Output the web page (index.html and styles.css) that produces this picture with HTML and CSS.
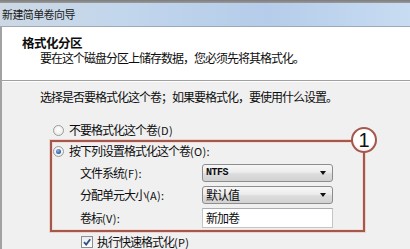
FILE: index.html
```html
<!DOCTYPE html>
<html lang="zh-CN">
<head>
<meta charset="utf-8">
<title>新建简单卷向导</title>
<link rel="stylesheet" href="styles.css">
</head>
<body>
<div class="win">
  <div class="topstrip"></div>
  <div class="titlebar">新建简单卷向导</div>
  <div class="frame">
    <div class="header">
      <div class="h-title">格式化分区</div>
      <div class="h-sub">要在这个磁盘分区上储存数据，您必须先将其格式化。</div>
    </div>
    <div class="content">
      <div class="prompt">选择是否要格式化这个卷；如果要格式化，要使用什么设置。</div>
      <div class="radio"><span class="rb"></span><span>不要格式化这个卷<span class="k">(D)</span></span></div>
      <div class="hl">
        <span class="badge">1</span>
        <div class="radio"><span class="rb on"></span><span>按下列设置格式化这个卷<span class="k">(O):</span></span></div>
        <div class="grid">
          <span class="lbl">文件系统<span class="k">(F):</span></span>
          <div class="select"><span class="val mono">NTFS</span><span class="arrow"></span></div>
          <span class="lbl">分配单元大小<span class="k">(A):</span></span>
          <div class="select"><span class="val">默认值</span><span class="arrow"></span></div>
          <span class="lbl">卷标<span class="k">(V):</span></span>
          <div class="input">新加卷</div>
        </div>
      </div>
      <div class="check"><span class="cb"><svg viewBox="0 0 10 10" width="10" height="10"><path d="M2 5.2 L4.2 7.6 L8.2 2.2" fill="none" stroke="#2d4f8a" stroke-width="1.8"/></svg></span><span>执行快速格式化<span class="k">(P)</span></span></div>
    </div>
  </div>
</div>
</body>
</html>
```

FILE: styles.css
```css
* { box-sizing: border-box; }
html, body { margin: 0; padding: 0; }
body {
  width: 410px;
  height: 249px;
  overflow: hidden;
  background: #f0f0f0;
  font-family: "Noto Sans CJK SC", "Noto Sans", sans-serif;
  font-size: 12px;
  letter-spacing: -1px;
  color: #0d0d0d;
}
.win { display: flex; flex-direction: column; height: 249px; }
.topstrip {
  height: 3px;
  background: linear-gradient(#7c7c7c, #9a9a9a);
}
.titlebar {
  height: 27px;
  padding-left: 2px;
  display: flex;
  align-items: center;
  font-size: 11px;
  letter-spacing: -0.6px;
  line-height: 12px;
  color: #1a1a1a;
  background: linear-gradient(to right, #ccd8e4 0%, #c2d6ec 30%, #b5cdea 65%, #c8dcf2 100%);
  border-bottom: 1px solid #9fa9b4;
}
.frame {
  flex: 1;
  border-left: 2px solid #a2a2a2;
  display: flex;
  flex-direction: column;
}
.header {
  background: #fff;
  height: 54px;
  padding: 8px 0 0 20px;
  border-bottom: 1px solid #a0a0a0;
  box-shadow: 0 1px 0 #ffffff;
}
.h-title {
  font-size: 12.5px;
  letter-spacing: -0.5px;
  line-height: 16px;
  font-weight: bold;
}
.h-sub {
  padding-left: 18px;
  line-height: 14px;
}
.content {
  flex: 1;
  padding: 9px 0 0 38px;
}
.prompt { line-height: 14px; }
.k { letter-spacing: 0.3px; font-size: 11px; }
.radio {
  display: flex;
  align-items: center;
  gap: 5px;
  line-height: 14px;
  margin-left: 13px;
}
.content > .radio { margin-top: 19px; }
.rb {
  width: 11px;
  height: 11px;
  border-radius: 50%;
  border: 1px solid #9a9a9a;
  background: radial-gradient(circle at 50% 40%, #ffffff 0%, #e6e6e6 100%);
  display: inline-block;
  position: relative;
}
.rb.on::after {
  content: "";
  position: absolute;
  left: 2px; top: 2px;
  width: 5px; height: 5px;
  border-radius: 50%;
  background: radial-gradient(circle at 40% 35%, #8fb6e8 0%, #2b5c9e 70%, #1c3f77 100%);
}
.hl {
  position: relative;
  width: 315px;
  margin: 3px 0 0 10px;
  padding: 2px 0 2px 0;
  border: 2px solid #a4574d;
  box-shadow: 0 0 0 1px #ecd3cc, inset 0 0 0 1px #f3dcd6;
}
.hl .radio { margin-left: 1px; }
.badge {
  position: absolute;
  right: -14px;
  top: -15px;
  width: 26px;
  height: 26px;
  border-radius: 50%;
  border: 2px solid #a4574d;
  background: radial-gradient(circle at 50% 40%, #ffffff 55%, #f1e1dc 100%);
  display: flex;
  align-items: center;
  justify-content: center;
  font-family: "Liberation Sans", Arial, sans-serif;
  font-size: 20px;
  letter-spacing: 0;
  line-height: 1;
  color: #111;
}
.grid {
  display: grid;
  grid-template-columns: 122px 131px;
  row-gap: 4px;
  align-items: center;
  margin: 6px 0 0 28px;
}
.lbl { line-height: 14px; }
.select {
  height: 18px;
  border: 1px solid #8d8d8d;
  border-radius: 3px;
  background: linear-gradient(#f6f6f6 0%, #ececec 45%, #dcdcdc 55%, #d2d2d2 100%);
  display: flex;
  align-items: center;
  justify-content: space-between;
  padding: 0 6px 0 3px;
}
.val { line-height: 14px; }
.mono {
  font-family: "Liberation Mono", monospace;
  font-weight: bold;
  font-size: 10px;
  letter-spacing: -0.5px;
}
.arrow {
  width: 0; height: 0;
  border-left: 3.5px solid transparent;
  border-right: 3.5px solid transparent;
  border-top: 4px solid #111;
}
.input {
  height: 20px;
  border: 1px solid #c5c5c5;
  border-top-color: #abadb3;
  background: #fff;
  line-height: 18px;
  padding-left: 3px;
}
.check {
  display: flex;
  align-items: center;
  gap: 4px;
  margin: 3px 0 0 41px;
  line-height: 14px;
}
.cb {
  width: 12px; height: 12px;
  border: 1px solid #8e8f8f;
  background: linear-gradient(#eaeaea, #ffffff);
  display: inline-flex;
  align-items: center;
  justify-content: center;
}
```
